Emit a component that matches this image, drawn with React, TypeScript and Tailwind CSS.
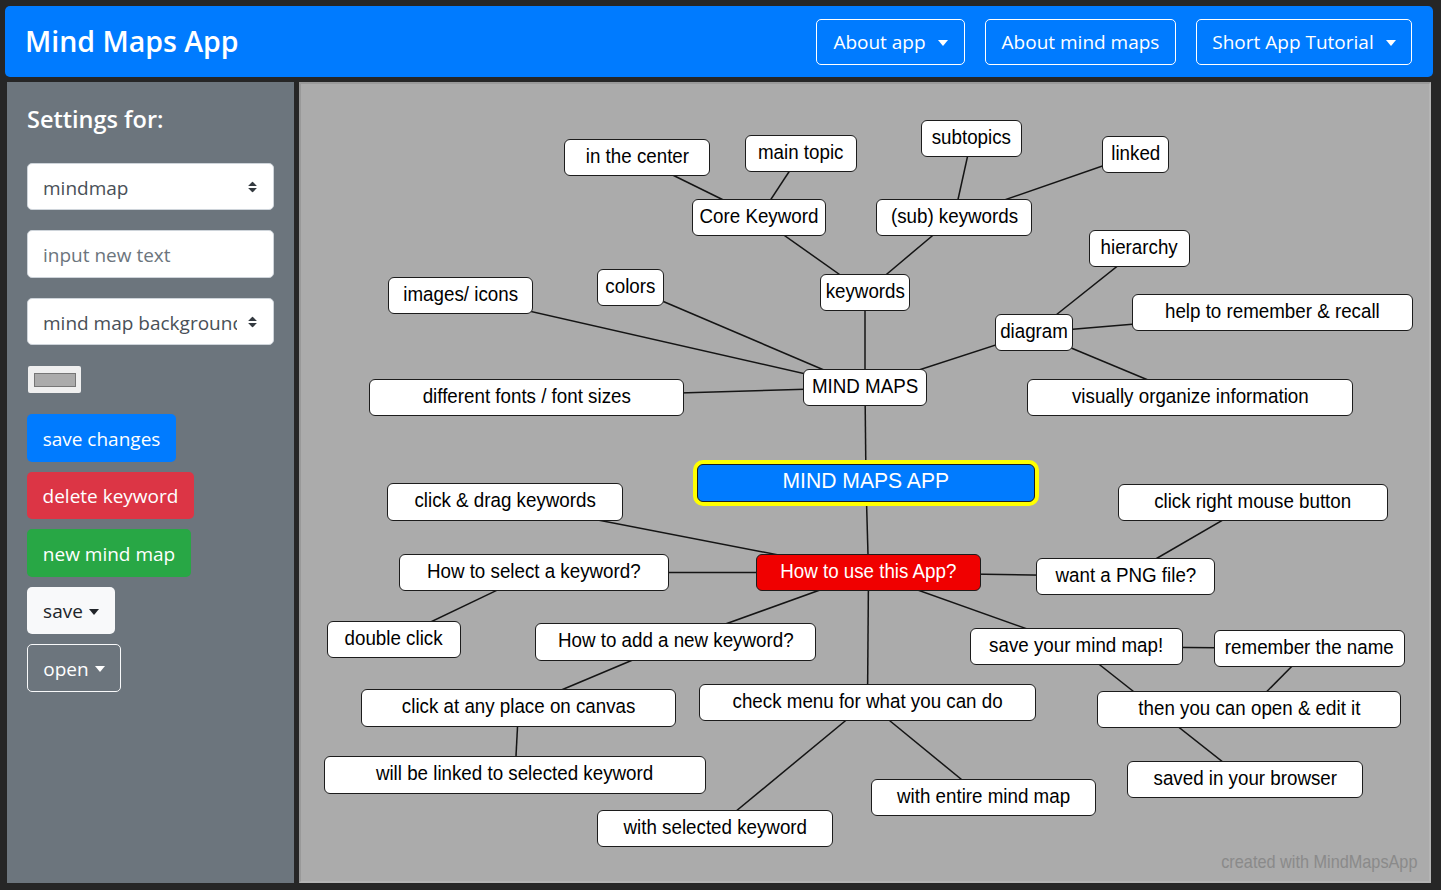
import React from "react";

type Kind = "plain" | "root" | "red";

interface MapNode {
  id: string;
  text: string;
  x: number;
  y: number;
  w: number;
  h: number;
  kind?: Kind;
}

// page coordinates of the canvas padding box
const OX = 301;
const OY = 84;

const nodes: MapNode[] = [
  { id: "center", text: "in the center", x: 564, y: 139, w: 146, h: 37 },
  { id: "main", text: "main topic", x: 745, y: 135, w: 112, h: 37 },
  { id: "subtopics", text: "subtopics", x: 921, y: 120, w: 101, h: 37 },
  { id: "linked", text: "linked", x: 1102, y: 136, w: 67, h: 37 },
  { id: "core", text: "Core Keyword", x: 692, y: 199, w: 134, h: 37 },
  { id: "sub", text: "(sub) keywords", x: 876, y: 199, w: 156, h: 37 },
  { id: "hier", text: "hierarchy", x: 1089, y: 230, w: 101, h: 37 },
  { id: "images", text: "images/ icons", x: 388, y: 277, w: 145, h: 37 },
  { id: "colors", text: "colors", x: 597, y: 269, w: 67, h: 37 },
  { id: "keywords", text: "keywords", x: 820, y: 274, w: 90, h: 37 },
  { id: "help", text: "help to remember & recall", x: 1132, y: 294, w: 281, h: 37 },
  { id: "diagram", text: "diagram", x: 995, y: 314, w: 78, h: 37 },
  { id: "fonts", text: "different fonts / font sizes", x: 369, y: 379, w: 315, h: 37 },
  { id: "mm", text: "MIND MAPS", x: 803, y: 369, w: 124, h: 37 },
  { id: "vis", text: "visually organize information", x: 1027, y: 379, w: 326, h: 37 },
  { id: "app", text: "MIND MAPS APP", x: 697, y: 464, w: 338, h: 38, kind: "root" },
  { id: "drag", text: "click & drag keywords", x: 387, y: 483, w: 236, h: 38 },
  { id: "right", text: "click right mouse button", x: 1118, y: 484, w: 270, h: 37 },
  { id: "select", text: "How to select a keyword?", x: 399, y: 554, w: 270, h: 37 },
  { id: "use", text: "How to use this App?", x: 756, y: 554, w: 225, h: 37, kind: "red" },
  { id: "png", text: "want a PNG file?", x: 1036, y: 558, w: 179, h: 37 },
  { id: "dbl", text: "double click", x: 327, y: 621, w: 134, h: 37 },
  { id: "add", text: "How to add a new keyword?", x: 535, y: 623, w: 281, h: 38 },
  { id: "savemm", text: "save your mind map!", x: 970, y: 628, w: 213, h: 37 },
  { id: "remember", text: "remember the name", x: 1214, y: 630, w: 191, h: 37 },
  { id: "clickany", text: "click at any place on canvas", x: 361, y: 689, w: 315, h: 38 },
  { id: "menu", text: "check menu for what you can do", x: 699, y: 684, w: 337, h: 37 },
  { id: "open", text: "then you can open & edit it", x: 1097, y: 691, w: 304, h: 37 },
  { id: "linkedsel", text: "will be linked to selected keyword", x: 324, y: 756, w: 382, h: 38 },
  { id: "browser", text: "saved in your browser", x: 1127, y: 761, w: 236, h: 37 },
  { id: "entire", text: "with entire mind map", x: 871, y: 779, w: 225, h: 37 },
  { id: "withsel", text: "with selected keyword", x: 597, y: 810, w: 236, h: 37 },
];

const edges: [string, string][] = [
  ["app", "mm"],
  ["app", "use"],
  ["mm", "keywords"],
  ["mm", "images"],
  ["mm", "colors"],
  ["mm", "fonts"],
  ["mm", "diagram"],
  ["keywords", "core"],
  ["keywords", "sub"],
  ["core", "center"],
  ["core", "main"],
  ["sub", "subtopics"],
  ["sub", "linked"],
  ["diagram", "hier"],
  ["diagram", "help"],
  ["diagram", "vis"],
  ["use", "drag"],
  ["use", "select"],
  ["select", "dbl"],
  ["use", "add"],
  ["add", "clickany"],
  ["clickany", "linkedsel"],
  ["use", "menu"],
  ["menu", "withsel"],
  ["menu", "entire"],
  ["use", "png"],
  ["png", "right"],
  ["use", "savemm"],
  ["savemm", "remember"],
  ["savemm", "browser"],
  ["remember", "open"],
];

const byId = Object.fromEntries(nodes.map((n) => [n.id, n]));

function centre(n: MapNode) {
  return { cx: n.x - OX + n.w / 2, cy: n.y - OY + n.h / 2 };
}

function Caret({ className }: { className: string }) {
  return <span className={`inline-block w-0 h-0 border-t-[6px] border-x-[5.5px] border-x-transparent ${className}`} />;
}

function SelectArrows() {
  return (
    <svg width="9" height="11" viewBox="0 0 4 5" className="absolute right-[16px] top-1/2 -translate-y-1/2">
      <path fill="#343a40" d="M2 0L0 2h4zm0 5L0 3h4z" />
    </svg>
  );
}

function MapBox({ n }: { n: MapNode }) {
  const kind = n.kind ?? "plain";
  const look =
    kind === "root"
      ? "bg-[#007bff] text-white shadow-[0_0_0_4px_#ffff00] pb-[4px]"
      : kind === "red"
        ? "bg-[#f00000] text-white pb-[3px]"
        : "bg-white text-black pb-[3px]";
  const label =
    kind === "root" ? "text-[22px] scale-x-[0.96]" : "text-[20.5px] scale-x-[0.915]";

  return (
    <div
      className={`absolute flex items-center justify-center rounded-[6px] border-[1.5px] border-[#1c1c1c] whitespace-nowrap ${look}`}
      style={{ left: n.x - OX, top: n.y - OY, width: n.w, height: n.h }}
    >
      <span className={`inline-block leading-none ${label}`}>{n.text}</span>
    </div>
  );
}

function HeaderButton({ label, width, caret = false }: { label: string; width: string; caret?: boolean }) {
  return (
    <button className={`${width} h-[46px] flex items-center justify-center rounded-[5px] border border-white pt-[2px] text-[19px] text-white`}>
      <span>{label}</span>
      {caret && <Caret className="ml-[12px] border-t-white" />}
    </button>
  );
}

export default function App() {
  return (
    <div className="w-[1441px] h-[890px] overflow-hidden bg-[#262626] pt-[6px] font-['Open_Sans',sans-serif]">
      {/* Navbar */}
      <header className="ml-[5px] w-[1428px] h-[71px] rounded-[5px] bg-[#007bff] flex items-center justify-between pl-[20px] pr-[21px]">
        <h1 className="text-[28.5px] font-semibold leading-none text-white">Mind Maps App</h1>
        <div className="flex items-center gap-[20px]">
          <HeaderButton label="About app" width="w-[149px]" caret />
          <HeaderButton label="About mind maps" width="w-[191px]" />
          <HeaderButton label="Short App Tutorial" width="w-[216px]" caret />
        </div>
      </header>

      <div className="flex mt-[5px] ml-[7px] gap-[5px]">
        {/* Settings */}
        <aside className="w-[287px] h-[801px] bg-[#6c757d] pl-[20px] pt-[23px] flex flex-col items-start">
          <h4 className="h-[28px] leading-[28px] text-[23.5px] font-semibold text-white">Settings for:</h4>

          <div className="relative mt-[30px] w-[247px] h-[47px] rounded-[5px] border border-[#ced4da] bg-white flex items-center pl-[15px] pt-[3px] text-[19px] text-[#495057]">
            mindmap
            <SelectArrows />
          </div>

          <div className="mt-[20px] w-[247px] h-[48px] rounded-[5px] border border-[#ced4da] bg-white flex items-center pl-[15px] pt-[3px] text-[19px] text-[#6c757d]">
            input new text
          </div>

          <div className="relative mt-[20px] w-[247px] h-[47px] rounded-[5px] border border-[#ced4da] bg-white flex items-center pl-[15px] pr-[36px] pt-[3px] text-[19px] text-[#495057]">
            <span className="overflow-hidden whitespace-nowrap">mind map background</span>
            <SelectArrows />
          </div>

          <div className="mt-[21px] ml-[1px] w-[53px] h-[27px] rounded-[2px] bg-[#efefef] flex items-center justify-center">
            <div className="w-[42px] h-[14px] bg-[#ababab] border border-[#767676]" />
          </div>

          <div className="mt-[21px] flex flex-col gap-[10px] text-[19px]">
            <button className="w-[149px] h-[47.6px] rounded-[5px] bg-[#007bff] pt-[2px] text-white">save changes</button>
            <button className="w-[167px] h-[47.6px] rounded-[5px] bg-[#dc3545] pt-[2px] text-white">delete keyword</button>
            <button className="w-[164px] h-[47.6px] rounded-[5px] bg-[#28a745] pt-[2px] text-white">new mind map</button>
            <button className="w-[88px] h-[47.6px] rounded-[5px] bg-[#f8f9fa] pt-[2px] text-[#212529] flex items-center justify-center">
              <span>save</span>
              <Caret className="ml-[6px] border-t-[#212529]" />
            </button>
            <button className="w-[94px] h-[47.6px] rounded-[5px] border border-[#f8f9fa] pt-[2px] text-white flex items-center justify-center">
              <span>open</span>
              <Caret className="ml-[6px] border-t-white" />
            </button>
          </div>
        </aside>

        {/* Mind map canvas */}
        <main className="relative w-[1132px] h-[801px] bg-[#ababab] border-2 border-t-[#999999] border-l-[#999999] border-r-[#b4b4b4] border-b-[#b4b4b4] font-['Liberation_Sans',Arial,sans-serif]">
          <svg className="absolute inset-0" width={1128} height={797}>
            {edges.map(([a, b]) => {
              const p = centre(byId[a]);
              const q = centre(byId[b]);
              return <line key={a + b} x1={p.cx} y1={p.cy} x2={q.cx} y2={q.cy} stroke="#141414" strokeWidth={1.5} />;
            })}
          </svg>

          {nodes.map((n) => (
            <MapBox key={n.id} n={n} />
          ))}

          <span className="absolute top-[770px] right-[12px] origin-right scale-x-[0.915] text-[17.8px] leading-none text-[#8a8a8a] whitespace-nowrap">
            created with MindMapsApp
          </span>
        </main>
      </div>
    </div>
  );
}
